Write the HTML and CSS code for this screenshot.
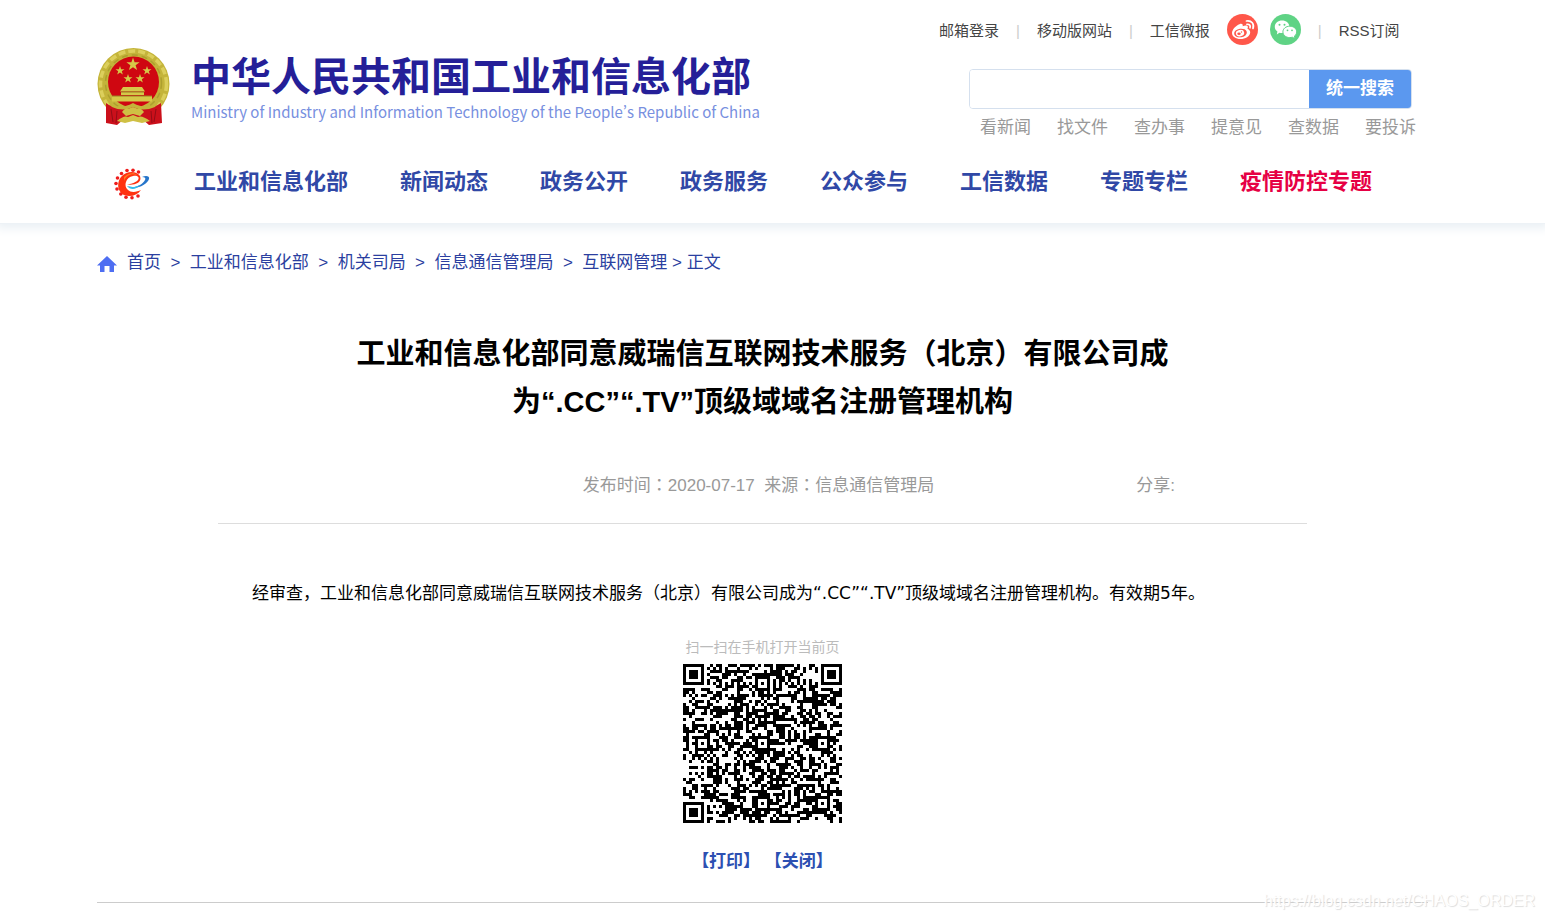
FILE: index.html
```html
<!DOCTYPE html>
<html lang="zh-CN">
<head>
<meta charset="utf-8">
<title>工业和信息化部</title>
<link rel="stylesheet" href="styles.css">
</head>
<body>
<header class="site-header">
  <div class="container">
    <div class="masthead">
      <a class="brand" href="#">
        <svg class="emblem" viewBox="0 0 74 80" aria-hidden="true">
          <circle cx="36.500" cy="37" r="36" fill="#c4b43a"/>
          <circle cx="36.500" cy="37" r="33" fill="none" stroke="#dccf5c" stroke-width="3.500" stroke-dasharray="7 3"/>
          <circle cx="36.500" cy="36" r="28" fill="none" stroke="#ad9f2e" stroke-width="1.500" stroke-dasharray="6 4"/>
          <circle cx="36.500" cy="35" r="25.500" fill="#cf0711"/>
          <g fill="#d6c848">
            <path d="M36 10.500l1.600 4.700 5 .1-4 3 1.500 4.800-4.100-2.900-4.100 2.900 1.500-4.800-4-3 5-.1z"/>
            <path id="s" d="M23 19l1.100 3.200 3.400.1-2.700 2 1 3.300-2.800-2-2.800 2 1-3.300-2.700-2 3.400-.1z"/>
            <use href="#s" x="27"/><use href="#s" x="8" y="8"/><use href="#s" x="20" y="8"/>
            <path d="M26 40h19l3 4.500H23zM24 45h23v3H24zM15 49h40v5.500H15z"/>
          </g>
          <path d="M24 45h23M15 49h40" stroke="#9a7f22"/>
          <path d="M9 56q9 7 18 4l9-3 9 3q9 3 19-4l1 20-13 2-7-6-9 2-9-2-7 6-11-2z" fill="#cb101b"/>
          <path d="M13 57q10 6 23-1 13 7 24 1l-2 3q-12 5-22 0-10 5-21 0z" fill="#c4b43a"/>
          <path d="M25 65q3-5 6-3l5-2 5 2q3-2 6 3l-4 4-7-2-7 2z" fill="#cfc044"/>
          <path d="M20 74q7-6 11-4l5-2 5 2q4-2 12 4l-8 2-9-2-8 2z" fill="#cfc044"/>
          <path d="M14 62l2 13M20 64l-1 12M59 62l-2 13M54 64l1 12" stroke="#930c16" fill="none"/>
        </svg>
        <span class="brand-text">
          <span class="brand-zh">中华人民共和国工业和信息化部</span>
          <span class="brand-en" lang="en">Ministry of Industry and Information Technology of the People’s Republic of China</span>
        </span>
      </a>
      <div class="tools">
        <div class="top-links">
          <a href="#">邮箱登录</a><span class="sep">|</span>
          <a href="#">移动版网站</a><span class="sep">|</span>
          <a href="#">工信微报</a>
          <span class="social">
            <a href="#" aria-label="微博"><svg viewBox="0 0 31 31">
              <circle cx="15.500" cy="15.500" r="15.500" fill="#ff574a"/>
              <path d="M12.500 10.200c2-1 3.700-.2 3.200 2 2-1 5-1.300 5.200.8.1.8-.5 1.400-.4 1.700.2.400 2.700 1 2.700 3.500 0 4-5 6.800-9.700 6.800S5 22.500 5 19s3.900-7.500 7.500-8.800z" fill="#fff"/>
              <ellipse cx="13.500" cy="19" rx="6.400" ry="4.300" fill="#ff574a" transform="rotate(-8 13.500 19)"/>
              <ellipse cx="13" cy="19.100" rx="4.200" ry="3.300" fill="#fff" transform="rotate(-15 13 19)"/>
              <ellipse cx="12" cy="19.700" rx="1.700" ry="1.300" fill="#ff574a"/><circle cx="14.500" cy="18" r=".7" fill="#ff574a"/>
              <path d="M19.500 7c5.200-.8 8 3.200 6.500 7.500M20 10.300c2.500-.3 3.700 1.400 3 3.500" fill="none" stroke="#fff" stroke-width="1.700" stroke-linecap="round"/>
            </svg></a>
            <a href="#" aria-label="微信"><svg viewBox="0 0 31 31">
              <circle cx="15.500" cy="15.500" r="15.500" fill="#5fd385"/>
              <path d="M12 6.500c4.200 0 7.400 2.600 7.400 6.200s-3.200 6.400-7.400 6.400c-.9 0-1.800-.1-2.600-.4L6.800 20.500l.6-3C5.700 16.300 4.800 14.600 4.800 12.700c0-3.600 3.200-6.200 7.200-6.200z" fill="#fff"/>
              <path d="M19.800 12.200c3.900 0 6.900 2.500 6.900 5.700 0 1.700-.9 3.100-2.300 4.200l.6 2.600-2.700-1.500c-.8.2-1.600.4-2.500.4-3.900 0-6.900-2.500-6.900-5.700s3-5.700 6.900-5.700z" fill="#fff" stroke="#5fd385"/>
              <g fill="#5fd385"><circle cx="9.500" cy="10.800" r="1"/><circle cx="14.500" cy="10.800" r="1"/><circle cx="17.500" cy="16.300" r=".9"/><circle cx="22" cy="16.300" r=".9"/></g>
            </svg></a>
          </span>
          <span class="sep">|</span>
          <a href="#">RSS订阅</a>
        </div>
        <form class="search" onsubmit="return false">
          <input type="text" aria-label="统一搜索">
          <button type="submit">统一搜索</button>
        </form>
        <div class="quick-links">
          <a href="#">看新闻</a><a href="#">找文件</a><a href="#">查办事</a><a href="#">提意见</a><a href="#">查数据</a><a href="#">要投诉</a>
        </div>
      </div>
    </div>
    <nav class="main-nav">
      <a class="nav-logo" href="#" aria-label="首页"><svg viewBox="0 0 36 32">
        <g fill="#ee1c1c">
          <circle cx="24.500" cy="4" r="1.800"/><circle cx="19" cy="2.200" r="1.800"/><circle cx="13" cy="2.500" r="1.800"/><circle cx="7.500" cy="5.500" r="1.800"/><circle cx="3.500" cy="10" r="1.800"/><circle cx="2" cy="15.500" r="1.800"/><circle cx="3" cy="21" r="1.800"/><circle cx="6.800" cy="26" r="1.800"/><circle cx="12" cy="29.200" r="1.800"/><circle cx="18" cy="29.800" r="1.800"/><circle cx="24" cy="28" r="1.800"/>
        </g>
        <path d="M26 8C22 2 12 3 7 9c-6 8-2 19 8 19 5 0 9-2 12-6-4 2-10 3-13 0-5-4-2-13 5-14 4-1 7 1 5 4-2 2-7 5-12 4 5 2 17 0 14-8z" fill="#ff3210"/>
        <path d="M10 9c4-4 10-5 13-2-6-2-11 1-13 6z" fill="#ff7a25"/>
        <path d="M13 18c8 3 15-1 18-6 1-2 0-3-3-3 4-2 8-1 7 2-2 6-14 12-22 7z" fill="#2675ca"/>
        <path d="M13 18c5 2 9 1 13-1-4 5-10 5-13 1z" fill="#35bdec"/>
      </svg></a>
      <a href="#">工业和信息化部</a><a href="#">新闻动态</a><a href="#">政务公开</a><a href="#">政务服务</a><a href="#">公众参与</a><a href="#">工信数据</a><a href="#">专题专栏</a><a class="hot" href="#">疫情防控专题</a>
    </nav>
  </div>
</header>
<main class="container page">
  <nav class="crumbs">
    <svg viewBox="0 0 20 16" aria-hidden="true"><path d="M10 0 20 9.500h-3V16h-4.500v-6h-5v6H3V9.500H0z" fill="#4e6ef2"/></svg>
    <span><a href="#">首页</a>&nbsp; &gt;&nbsp; <a href="#">工业和信息化部</a>&nbsp; &gt;&nbsp; <a href="#">机关司局</a>&nbsp; &gt;&nbsp; <a href="#">信息通信管理局</a>&nbsp; &gt;&nbsp; <a href="#">互联网管理</a> &gt; 正文</span>
  </nav>
  <article class="article">
    <h1>工业和信息化部同意威瑞信互联网技术服务（北京）有限公司成为“.CC”“.TV”顶级域域名注册管理机构</h1>
    <div class="meta">
      <span class="published">发布时间<span lang="zh-TW">：</span>2020-07-17&nbsp; 来源<span lang="zh-TW">：</span>信息通信管理局</span>
      <span class="share">分享:</span>
    </div>
    <p class="content">经审查，工业和信息化部同意威瑞信互联网技术服务（北京）有限公司成为“.CC”“.TV”顶级域域名注册管理机构。有效期5年。</p>
    <div class="scan">
      <p>扫一扫在手机打开当前页</p>
      <svg class="qr" viewBox="0 0 53 53" shape-rendering="crispEdges" role="img" aria-label="二维码"><path id="qr-modules"/></svg>
    </div>
    <div class="actions"><a href="#">【打印】</a> <a href="#">【关闭】</a></div>
  </article>
</main>
<div class="watermark">https://blog.csdn.net/CHAOS_ORDER</div>
<script src="qr.js"></script>
</body>
</html>
```
FILE: styles.css
```css
* { box-sizing: border-box; }

body {
  position: relative;
  min-height: 100vh;
  margin: 0;
  background: #fff;
  color: #000;
  font: 17px/24px "Liberation Sans", "Noto Sans CJK SC", sans-serif;
}

a { color: inherit; text-decoration: none; }
svg { display: block; }

.site-header,
.page { padding-right: 20px; }

.site-header {
  border-bottom: 1px solid #edf2f6;
  box-shadow: 0 0 10px 4px #e9eff4;
  clip-path: inset(0 0 -16px 0);
}

.container { width: 100%; max-width: 1331px; margin: 0 auto; }
.page.container { max-width: 1351px; }

.masthead { display: flex; justify-content: space-between; }

.brand { display: flex; gap: 20px; padding-top: 47px; }
.emblem { width: 74px; height: 80px; }
.brand-text {
  display: flex;
  flex-direction: column;
  font-family: "Noto Sans CJK SC", sans-serif;
  white-space: nowrap;
}
.brand-zh { color: #251f98; font-size: 40px; font-weight: 700; line-height: 54px; }
.brand-en {
  color: #7890e0;
  font-size: 15px;
  font-variant-east-asian: proportional-width;
  line-height: 22px;
}

.tools { width: 489px; padding-top: 14px; }
.top-links {
  display: flex;
  align-items: center;
  gap: 17px;
  height: 34px;
  color: #444;
  font-size: 15px;
  white-space: nowrap;
}
.sep { color: #ccc; }
.social { display: flex; gap: 12px; padding-bottom: 3px; }
.social svg { width: 31px; height: 31px; }

.search {
  display: flex;
  width: 443px;
  height: 40px;
  margin: 21px 0 0 30px;
  border: 1px solid #d5e0ee;
  border-radius: 4px;
  overflow: hidden;
}
.search input {
  flex: 1;
  min-width: 0;
  padding: 0 12px;
  border: 0;
  outline: 0;
  background: #fff;
  font: inherit;
}
.search button {
  width: 102px;
  padding: 0;
  border: 0;
  background: #5b98ef;
  color: #fff;
  font: inherit;
  font-weight: 700;
}
.quick-links {
  display: flex;
  gap: 26px;
  margin: 7px 0 0 41px;
  color: #999;
  white-space: nowrap;
}

.main-nav {
  display: flex;
  align-items: center;
  gap: 52px;
  padding: 22px 0 21px 17px;
  color: #3048a6;
  font-size: 22px;
  font-weight: 700;
  line-height: 40px;
  white-space: nowrap;
}
.nav-logo { margin-right: -8px; padding-top: 4px; }
.nav-logo svg { width: 36px; height: 32px; }
.hot { color: #e60044; }

.crumbs { display: flex; align-items: center; gap: 10px; padding-top: 27px; color: #2b3fa0; }
.crumbs svg { width: 20px; height: 16px; margin-top: 2px; }

.article {
  padding: 55px 121px 28px;
  border-bottom: 1px solid #ccc;
}
h1 {
  max-width: 840px;
  margin: 0 auto;
  font-size: 29px;
  line-height: 48px;
  text-align: center;
}
.meta {
  display: grid;
  grid-template-columns: 1fr auto 1fr;
  padding: 48px 8px 25px 0;
  border-bottom: 1px solid #ddd;
  color: #999;
}
.published { grid-column: 2; }
.share { padding-left: 202px; }
.content {
  margin: 57px 0 0;
  font-family: "DejaVu Sans", "Noto Sans CJK SC", sans-serif;
  text-indent: 2em;
}
.scan p { margin: 30px 0 5px; color: #bbb; font-size: 14px; text-align: center; }
.qr { width: 159px; height: 159px; margin: 0 auto; }
.actions { margin-top: 27px; color: #2d50b2; font-weight: 700; text-align: center; }

.watermark {
  position: absolute;
  right: 10px;
  bottom: 6px;
  color: #fff;
  font-size: 16px;
  text-shadow: 1px 1px 1px #ddd;
}
```
FILE: qr.js
```js
(function () {
  var size = 53, centers = [6, 26, 46], d = "", seed = 20200717;
  function ring(x, y, cx, cy) { return Math.max(Math.abs(x - cx), Math.abs(y - cy)); }
  function dark(x, y) {
    var noise, i, j, r;
    seed = (Math.imul(seed, 1664525) + 1013904223) >>> 0;
    noise = (seed >>> 16) % 100 < 52;
    var finders = [[3, 3], [49, 3], [3, 49]];
    for (i = 0; i < 3; i++) {
      r = ring(x, y, finders[i][0], finders[i][1]);
      if (r <= 4) return r < 2 || r === 3;
    }
    for (i = 0; i < 3; i++) {
      for (j = 0; j < 3; j++) {
        if ((i === 0 && j !== 1) || (j === 0 && i === 2)) continue;
        r = ring(x, y, centers[i], centers[j]);
        if (r <= 2) return r !== 1;
      }
    }
    if (x === 6 || y === 6) return (x + y) % 2 === 0;
    return noise;
  }
  for (var y = 0; y < size; y++) {
    for (var x = 0; x < size; x++) {
      if (dark(x, y)) d += "M" + x + " " + y + "h1v1h-1z";
    }
  }
  document.getElementById("qr-modules").setAttribute("d", d);
})();
```
